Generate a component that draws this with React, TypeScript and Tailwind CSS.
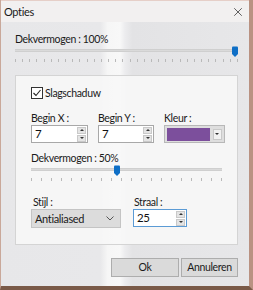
import { X } from "lucide-react";

function Ticks({ count }: { count: number }) {
  return (
    <div className="flex justify-between h-[3px] mt-[2px]">
      {Array.from({ length: count }).map((_, i) => (
        <div key={i} className="w-px h-[3px] bg-[#b9b9b9]" />
      ))}
    </div>
  );
}

function Thumb() {
  return (
    <svg width="6" height="11" viewBox="0 0 6 11" className="block">
      <path d="M0 1.5 Q0 0.5 1 0.5 H5 Q6 0.5 6 1.5 V8 L3 11 L0 8 Z" fill="#0f6fc6" />
    </svg>
  );
}

function Slider({ pos, ticks }: { pos: number; ticks: number }) {
  return (
    <div className="relative">
      <div className="relative h-[11px]">
        <div className="absolute left-0 right-0 top-[3px] h-[3px] bg-[#dadada] border-y border-[#cfcfcf]" />
        <div className="absolute top-0" style={{ left: `${pos}%` }}>
          <Thumb />
        </div>
      </div>
      <Ticks count={ticks} />
    </div>
  );
}

function Spin() {
  return (
    <div className="flex flex-col gap-px pr-px">
      <div className="w-[9px] h-[7px] bg-[#e4e4e4] border border-[#c9c9c9] flex items-center justify-center">
        <div className="w-0 h-0 border-x-[2px] border-x-transparent border-b-[2px] border-b-[#333]" />
      </div>
      <div className="w-[9px] h-[7px] bg-[#e4e4e4] border border-[#c9c9c9] flex items-center justify-center">
        <div className="w-0 h-0 border-x-[2px] border-x-transparent border-t-[2px] border-t-[#333]" />
      </div>
    </div>
  );
}

function NumField({ value, w, focus }: { value: string; w: string; focus?: boolean }) {
  return (
    <div
      className={`${w} h-[18px] flex items-center justify-between bg-white border ${
        focus ? "border-[#5b9bd5]" : "border-[#a8a8a8]"
      }`}
    >
      <span className="pl-[3px] text-[11.5px] leading-none text-[#111]">{value}</span>
      <Spin />
    </div>
  );
}

export default function App() {
  return (
    <div
      className="w-[253px] h-[290px] flex flex-col border-l border-l-[#c9a89a] border-r-4 border-r-[#b99282] border-b-4 border-b-[#7a5a48] bg-[linear-gradient(90deg,#e7e7e9_0%,#e8e8ea_40%,#f6f6f6_43%,#f8f8f8_48%,#ececee_50%,#e3e3e5_53%,#e7e7e9_100%)] text-[#1a1a1a] text-[10.5px] tracking-[-0.35px]"
      style={{ fontFamily: 'Lato, "Liberation Sans", sans-serif' }}
    >
      <div className="h-[22px] flex items-center justify-between pl-[3px] pr-[4px] bg-[#f2f0f0] border-t border-t-[#e6cfc8]">
        <span className="leading-none text-[11px]">Opties</span>
        <X size={14} strokeWidth={1.2} className="text-[#222]" />
      </div>

      <div className="flex flex-col pl-[14px] pr-[11px] pt-[10px]">
        <div className="leading-[14px]">Dekvermogen : 100%</div>
        <Slider pos={97.3} ticks={32} />

        <div className="mt-[13px] h-[170px] bg-[#f7f7f7]/90 border border-[#d4d4d4] px-[15px] pt-[11px] flex flex-col">
          <div className="flex items-center gap-[2px] h-[12px]">
            <div className="w-[12px] h-[12px] border border-[#333] bg-white flex items-center justify-center">
              <svg width="10" height="10" viewBox="0 0 10 10">
                <path d="M1.5 5 L4 7.5 L8.5 2" fill="none" stroke="#222" strokeWidth="1.1" />
              </svg>
            </div>
            <span className="leading-none">Slagschaduw</span>
          </div>

          <div className="flex gap-[10px] mt-[13px]">
            <div className="flex flex-col gap-px">
              <span className="leading-[12px]">Begin X :</span>
              <NumField value="7" w="w-[57px]" />
            </div>
            <div className="flex flex-col gap-px">
              <span className="leading-[12px]">Begin Y :</span>
              <NumField value="7" w="w-[56px]" />
            </div>
            <div className="flex flex-col gap-px">
              <span className="leading-[12px]">Kleur :</span>
              <div className="w-[61px] h-[18px] flex items-center bg-[#dedede] border border-[#b8b8b8] pl-[2px]">
                <div className="w-[43px] h-[13px] bg-[#7c4f9c]" />
                <div className="flex-1 flex justify-center">
                  <div className="w-[9px] h-[11px] bg-[#f2f2f2] border border-[#c9c9c9] flex items-center justify-center">
                    <div className="w-0 h-0 border-x-[2px] border-x-transparent border-t-[2px] border-t-[#333]" />
                  </div>
                </div>
              </div>
            </div>
          </div>

          <div className="leading-[14px] mt-[8px]">Dekvermogen : 50%</div>
          <div className="w-[191px]">
            <Slider pos={43.2} ticks={20} />
          </div>

          <div className="flex gap-[12px] mt-[15px]">
            <div className="flex flex-col gap-px">
              <span className="leading-[12px] pl-[2px]">Stijl :</span>
              <div className="w-[90px] h-[19px] flex items-center justify-between bg-[#dcdcdc] border border-[#c4c4c4] pl-[3px] pr-[6px]">
                <span className="leading-none text-[11px]">Antialiased</span>
                <svg width="8" height="5" viewBox="0 0 8 5">
                  <path d="M0.5 0.5 L4 4 L7.5 0.5" fill="none" stroke="#555" strokeWidth="1" />
                </svg>
              </div>
            </div>
            <div className="flex flex-col gap-px">
              <span className="leading-[12px] pl-[1px]">Straal :</span>
              <NumField value="25" w="w-[54px]" focus />
            </div>
          </div>
        </div>

        <div className="flex justify-end gap-[2px] mt-[13px]">
          <button className="w-[68px] h-[19px] bg-[#dadada] border border-[#adadad] leading-none">
            Ok
          </button>
          <button className="w-[57px] h-[19px] bg-[#dadada] border border-[#adadad] leading-none">
            Annuleren
          </button>
        </div>
      </div>
    </div>
  );
}
